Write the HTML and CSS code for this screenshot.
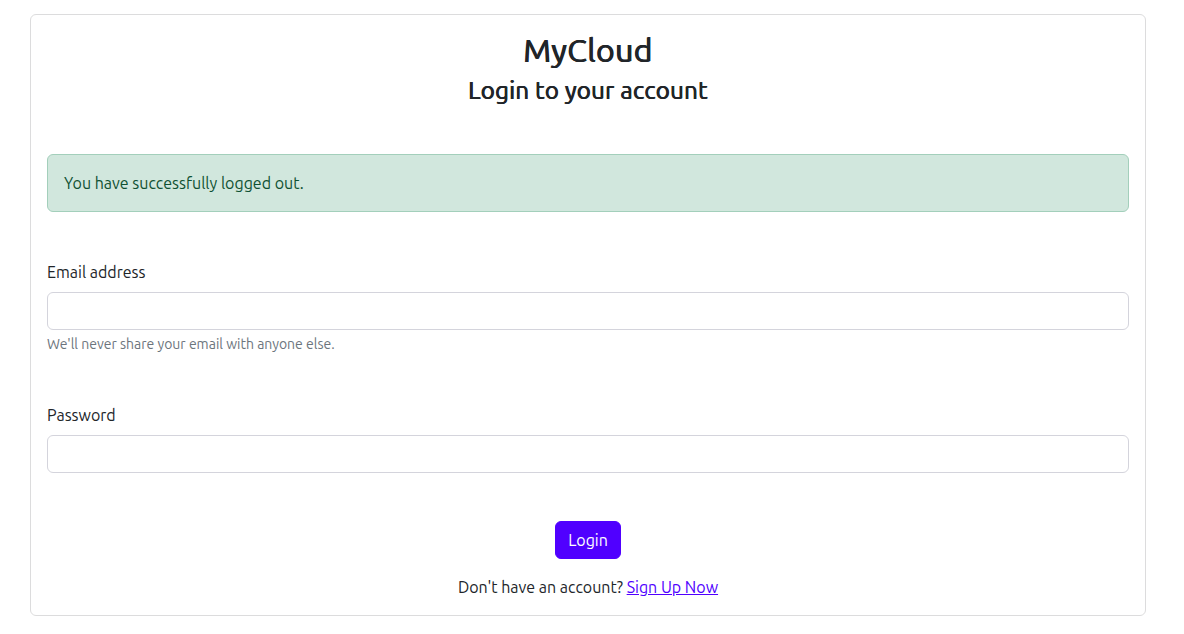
FILE: index.html
```html
<!DOCTYPE html>
<html lang="en">
<head>
<meta charset="utf-8">
<title>MyCloud - Login</title>
<link rel="stylesheet" href="styles.css">
</head>
<body>
<main class="page">
  <section class="card">
    <header class="card-head">
      <h2 class="brand">MyCloud</h2>
      <h4 class="subtitle">Login to your account</h4>
    </header>
    <div class="alert">You have successfully logged out.</div>
    <form class="login-form">
      <div class="field">
        <label class="field-label" for="email">Email address</label>
        <input class="field-input" type="email" id="email">
        <small class="field-help">We'll never share your email with anyone else.</small>
      </div>
      <div class="field">
        <label class="field-label" for="password">Password</label>
        <input class="field-input" type="password" id="password">
      </div>
      <div class="actions">
        <button class="btn" type="button">Login</button>
      </div>
      <p class="signup">Don't have an account? <a class="signup-link" href="#">Sign Up Now</a></p>
    </form>
  </section>
</main>
</body>
</html>
```
FILE: styles.css
```css
* { box-sizing: border-box; }
html, body { margin: 0; padding: 0; background: #fff; }
body {
  font-family: Ubuntu, "Open Sans", sans-serif;
  font-size: 16px;
  line-height: 1.5;
  color: #212529;
}
.page {
  padding: 14px 38px 0 30px;
}
.card {
  border: 1px solid #dcdcdd;
  border-radius: 6px;
  padding: 16px;
  display: flex;
  flex-direction: column;
}
.card-head {
  text-align: center;
  margin-bottom: 48px;
}
.brand {
  margin: 0;
  font-size: 32px;
  font-weight: 400;
  line-height: 1.2;
  letter-spacing: 0.4px;
  text-shadow: 0.6px 0 0 #212529, -0.5px 0 0 #212529;
}
.subtitle {
  margin: 8px 0 0;
  font-size: 24px;
  font-weight: 400;
  line-height: 1.2;
  letter-spacing: 0.3px;
  text-shadow: 0.5px 0 0 #212529, -0.4px 0 0 #212529;
}
.alert {
  background: #d1e7dd;
  border: 1px solid #a3cfbb;
  color: #0f5132;
  border-radius: 6px;
  padding: 16px;
  margin-bottom: 48px;
}
.login-form {
  display: flex;
  flex-direction: column;
}
.field {
  display: flex;
  flex-direction: column;
  margin-bottom: 48px;
}
.field-label {
  margin-bottom: 8px;
}
.field-input {
  height: 38px;
  border: 1px solid #d4d4dc;
  border-radius: 6px;
  padding: 6px 12px;
  font: inherit;
  background: #fff;
}
.field-help {
  margin-top: 4px;
  font-size: 14px;
  line-height: 21px;
  color: #6c757d;
}
.actions {
  display: flex;
  justify-content: center;
  margin-bottom: 16px;
}
.btn {
  font: inherit;
  line-height: 24px;
  padding: 6px 12px;
  border: 1px solid #5000ff;
  background: #5000ff;
  color: #fff;
  border-radius: 6px;
  cursor: pointer;
}
.signup {
  margin: 0;
  text-align: center;
}
.signup-link {
  color: #5000ff;
}
```
